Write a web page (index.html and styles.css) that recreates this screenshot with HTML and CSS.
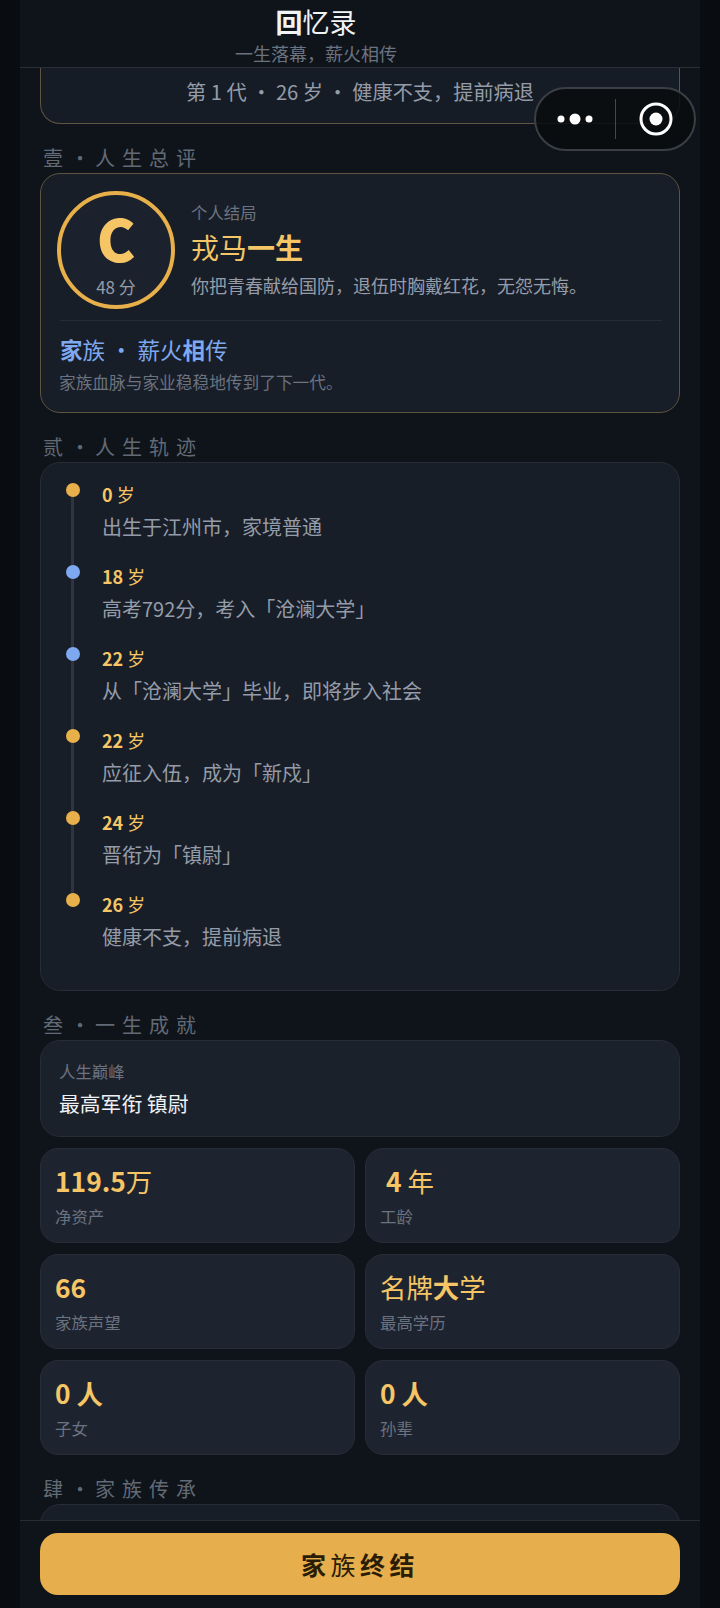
FILE: index.html
```html
<!doctype html>
<html>

<head>
  <meta charset="UTF-8">
  <title>回忆录</title>
  <link rel="stylesheet" href="styles.css">
</head>

<body>
  <div class="app">
    <header class="top">
      <h1><b>回</b>忆录</h1>
      <p>一生落幕，薪火相传</p>
    </header>

    <div class="capsule">
      <svg class="more" width="36" height="12" viewBox="0 0 36 12">
        <circle cx="4" cy="6" r="3.5" fill="#fff" />
        <circle cx="18" cy="6" r="5.5" fill="#fff" />
        <circle cx="32" cy="6" r="3.5" fill="#fff" />
      </svg>
      <span class="capsule-line"></span>
      <svg class="target" width="34" height="34" viewBox="0 0 34 34">
        <circle cx="17" cy="17" r="15" fill="none" stroke="#fff" stroke-width="3" />
        <circle cx="17" cy="17" r="6.5" fill="#fff" />
      </svg>
    </div>

    <main class="scroll">
      <div class="hero">第 1 代 · 26 岁 · 健康不支，提前病退</div>

      <h2 class="sec">壹<i>·</i>人生总评</h2>
      <section class="card gold">
        <div class="verdict">
          <div class="grade">
            <span class="grade-letter">C</span>
            <span class="grade-score">48 分</span>
          </div>
          <div class="verdict-text">
            <div class="small">个人结局</div>
            <div class="ending">戎马<b>一生</b></div>
            <div class="note">你把青春献给国防，退伍时胸戴红花，无怨无悔。</div>
          </div>
        </div>
        <div class="family">
          <div class="family-title"><b>家</b>族 · 薪火<b>相</b>传</div>
          <div class="family-note">家族血脉与家业稳稳地传到了下一代。</div>
        </div>
      </section>

      <h2 class="sec">贰<i>·</i>人生轨迹</h2>
      <section class="card timeline">
        <div class="event">
          <span class="dot"></span>
          <div class="age"><b>0</b> 岁</div>
          <div class="what">出生于江州市，家境普通</div>
        </div>
        <div class="event">
          <span class="dot blue"></span>
          <div class="age"><b>18</b> 岁</div>
          <div class="what">高考792分，考入「沧澜大学」</div>
        </div>
        <div class="event">
          <span class="dot blue"></span>
          <div class="age"><b>22</b> 岁</div>
          <div class="what">从「沧澜大学」毕业，即将步入社会</div>
        </div>
        <div class="event">
          <span class="dot"></span>
          <div class="age"><b>22</b> 岁</div>
          <div class="what">应征入伍，成为「新戍」</div>
        </div>
        <div class="event">
          <span class="dot"></span>
          <div class="age"><b>24</b> 岁</div>
          <div class="what">晋衔为「镇尉」</div>
        </div>
        <div class="event">
          <span class="dot"></span>
          <div class="age"><b>26</b> 岁</div>
          <div class="what">健康不支，提前病退</div>
        </div>
      </section>

      <h2 class="sec">叁<i>·</i>一生成就</h2>
      <section class="card peak">
        <div class="small">人生巅峰</div>
        <div class="peak-value">最高军衔 镇尉</div>
      </section>
      <div class="stats">
        <div class="stat">
          <div class="stat-value"><b>119.5</b>万</div>
          <div class="stat-label">净资产</div>
        </div>
        <div class="stat">
          <div class="stat-value"><b>&nbsp;4</b> 年</div>
          <div class="stat-label">工龄</div>
        </div>
        <div class="stat">
          <div class="stat-value"><b>66</b></div>
          <div class="stat-label">家族声望</div>
        </div>
        <div class="stat">
          <div class="stat-value">名牌<b>大</b>学</div>
          <div class="stat-label">最高学历</div>
        </div>
        <div class="stat">
          <div class="stat-value"><b>0 人</b></div>
          <div class="stat-label">子女</div>
        </div>
        <div class="stat">
          <div class="stat-value"><b>0 人</b></div>
          <div class="stat-label">孙辈</div>
        </div>
      </div>

      <h2 class="sec">肆<i>·</i>家族传承</h2>
      <section class="card rest"></section>
    </main>

    <footer class="bottom">
      <button class="end-btn"><b>家</b>族<b>终结</b></button>
    </footer>
  </div>
</body>

</html>
```

FILE: styles.css
```css
html,
body {
  margin: 0;
  padding: 0;
  background: #090c10;
}

body {
  font-family: "Noto Sans CJK SC", "Noto Sans", sans-serif;
  color: #959ca9;
}

h1,
h2,
p {
  margin: 0;
  font-weight: normal;
}

.app {
  position: relative;
  width: 680px;
  height: 1608px;
  margin: 0 20px;
  display: flex;
  flex-direction: column;
  overflow: hidden;
  background: #0f141a;
}

.top {
  height: 67px;
  flex: none;
  padding-right: 88px;
  border-bottom: 1px solid #2a3038;
  background: #0f141a;
  text-align: center;
  position: relative;
  z-index: 1;
}

.top h1 {
  font-size: 27px;
  line-height: 34px;
  padding-top: 5px;
  color: #f1f3f5;
}

.top p {
  font-size: 18px;
  line-height: 24px;
  margin-top: 2px;
  color: #6b7280;
}

.capsule {
  position: absolute;
  z-index: 2;
  left: 514px;
  top: 87px;
  width: 162px;
  height: 64px;
  box-sizing: border-box;
  border: 2px solid #3b3f45;
  border-radius: 32px;
  background: rgba(10, 12, 15, 0.88);
  display: flex;
  align-items: center;
}

.more {
  margin-left: 21px;
}

.capsule-line {
  width: 1px;
  height: 40px;
  margin-left: 22px;
  background: #44484e;
}

.target {
  margin-left: 23px;
}

.scroll {
  flex: 1;
  min-height: 0;
  overflow: hidden;
  padding: 0 20px;
}

.hero {
  height: 56px;
  box-sizing: border-box;
  padding-top: 9px;
  border: 1px solid #5e5440;
  border-top: 0;
  border-radius: 0 0 20px 20px;
  background: #161c25;
  text-align: center;
  font-size: 20.2px;
  line-height: 30px;
}

.sec {
  font-size: 20px;
  line-height: 26px;
  letter-spacing: 7px;
  padding-left: 3px;
  color: #626a76;
  margin: 21px 0 2px;
}

.sec i {
  font-style: normal;
  display: inline-block;
  box-sizing: border-box;
  width: 25px;
  padding-right: 7px;
  letter-spacing: 0;
  text-align: center;
}

.card {
  box-sizing: border-box;
  border: 1px solid #272d37;
  border-radius: 20px;
  background: #181e27;
}

.card.gold {
  height: 240px;
  border-color: #5e5440;
  padding: 17px 16px 0;
}

.verdict {
  display: flex;
  gap: 16px;
}

.grade {
  width: 118px;
  height: 118px;
  flex: none;
  box-sizing: border-box;
  border: 4px solid #e8b04a;
  border-radius: 50%;
  background: #1c222d;
  display: flex;
  flex-direction: column;
  align-items: center;
}

.grade-letter {
  font-size: 58px;
  line-height: 58px;
  margin-top: 13px;
  font-weight: 900;
  color: #f5c566;
}

.grade-score {
  font-size: 17px;
  line-height: 20px;
  margin-top: 11px;
}

.verdict-text {
  padding-top: 10px;
}

.small {
  font-size: 16.4px;
  line-height: 22px;
  color: #6b7280;
}

.ending {
  font-size: 28px;
  line-height: 38px;
  margin-top: 5px;
  color: #f5c566;
}

.note {
  font-size: 18px;
  line-height: 26px;
  margin-top: 6px;
}

.family {
  margin: 11px 1px 0 3px;
  padding-top: 12px;
  border-top: 1px solid #272d37;
}

.family-title {
  font-size: 22.5px;
  line-height: 32px;
  color: #7ea8ef;
}

.family-note {
  font-size: 16.7px;
  line-height: 22px;
  margin-top: 6px;
  margin-left: -1px;
  color: #6b7280;
}

.timeline {
  height: 529px;
  padding: 18px 0 0 61px;
}

.event {
  position: relative;
  height: 82px;
}

.event::before {
  content: "";
  position: absolute;
  left: -31px;
  top: 3px;
  width: 3px;
  height: 82px;
  background: #2f3540;
}

.event:last-child::before {
  display: none;
}

.dot {
  position: absolute;
  z-index: 1;
  left: -36px;
  top: 2px;
  width: 14px;
  height: 14px;
  border-radius: 50%;
  background: #e8b04a;
}

.dot.blue {
  background: #7ea8ef;
}

.age {
  font-size: 18px;
  line-height: 26px;
  color: #f5c566;
}

.what {
  font-size: 20px;
  line-height: 30px;
  margin-top: 5px;
}

.peak {
  height: 97px;
  padding: 19px 18px 0;
  background: #1b212b;
}

.peak-value {
  font-size: 20.8px;
  line-height: 30px;
  margin-top: 6px;
  color: #eef0f3;
}

.stats {
  display: grid;
  grid-template-columns: 315px 315px;
  grid-auto-rows: 95px;
  gap: 11px 10px;
  margin-top: 11px;
}

.stat {
  box-sizing: border-box;
  border: 1px solid #272d37;
  border-radius: 18px;
  background: #1e242f;
  padding: 13px 14px 0;
}

.stat-value {
  font-size: 26.4px;
  line-height: 38px;
  color: #f5c566;
}

.stat-label {
  font-size: 16.4px;
  line-height: 22px;
  margin-top: 5px;
  color: #6b7280;
}

.rest {
  height: 80px;
}

.bottom {
  position: absolute;
  z-index: 1;
  left: 0;
  right: 0;
  bottom: 0;
  height: 88px;
  box-sizing: border-box;
  padding: 12px 20px 0;
  border-top: 1px solid #262c34;
  background: #0f141a;
}

.end-btn {
  display: block;
  width: 100%;
  height: 62px;
  border: 0;
  border-radius: 18px;
  background: #e6ae4c;
  color: #2a1c05;
  font-family: inherit;
  font-size: 25px;
  letter-spacing: 4.5px;
}
```
